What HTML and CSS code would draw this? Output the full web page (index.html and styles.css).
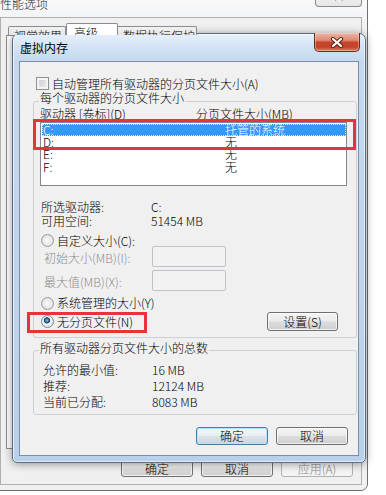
FILE: index.html
```html
<!DOCTYPE html>
<html lang="zh-CN">
<head>
<meta charset="utf-8">
<title>虚拟内存</title>
<link rel="stylesheet" href="styles.css">
</head>
<body>
<div class="desk">
  <div class="outer">
    <div class="outer-title">
      <span class="outer-caption">性能选项</span>
      <span class="outer-close">
        <svg width="12" height="10" viewBox="0 0 12 10"><path d="M2 1 L10 9 M10 1 L2 9" stroke="#555" stroke-width="2" fill="none"/></svg>
      </span>
    </div>
    <div class="outer-client">
      <div class="tabs">
        <span class="tab tab-first">视觉效果</span>
        <span class="tab tab-active">高级</span>
        <span class="tab tab-dep">数据执行保护</span>
      </div>
      <div class="tab-page"></div>
      <div class="outer-buttons">
        <span class="btn obtn">确定</span>
        <span class="btn obtn">取消</span>
        <span class="btn obtn btn-disabled">应用(A)</span>
      </div>
    </div>
  </div>

  <div class="dialog">
    <div class="dlg-title">
      <span class="dlg-caption">虚拟内存</span>
      <span class="dlg-close">
        <svg width="14" height="11" viewBox="0 0 14 11">
          <path d="M3 2 L11 9 M11 2 L3 9" stroke="#5a2418" stroke-width="4.2" stroke-linecap="round" fill="none"/>
          <path d="M3 2 L11 9 M11 2 L3 9" stroke="#ffffff" stroke-width="2.2" stroke-linecap="round" fill="none"/>
        </svg>
      </span>
    </div>
    <div class="dlg-client">
      <div class="chk-row">
        <span class="checkbox"></span>
        <span>自动管理所有驱动器的分页文件大小(A)</span>
      </div>

      <div class="group group-drives">
        <span class="glabel">每个驱动器的分页文件大小</span>
        <div class="cols">
          <span class="col1">驱动器 [卷标](D)</span>
          <span>分页文件大小(MB)</span>
        </div>
        <div class="list">
          <div class="row sel"><span class="rc1">C:</span><span>托管的系统</span></div>
          <div class="row"><span class="rc1">D:</span><span>无</span></div>
          <div class="row"><span class="rc1">E:</span><span>无</span></div>
          <div class="row"><span class="rc1">F:</span><span>无</span></div>
        </div>
        <div class="info">
          <div class="info-row"><span class="info-l">所选驱动器:</span><span>C:</span></div>
          <div class="info-row"><span class="info-l">可用空间:</span><span>51454 MB</span></div>
        </div>
        <div class="radio-row r-custom">
          <span class="radio"></span>
          <span>自定义大小(C):</span>
        </div>
        <div class="field">
          <span class="field-l">初始大小(MB)(I):</span>
          <span class="input"></span>
        </div>
        <div class="field field2">
          <span class="field-l">最大值(MB)(X):</span>
          <span class="input"></span>
        </div>
        <div class="radio-row r-sys">
          <span class="radio"></span>
          <span>系统管理的大小(Y)</span>
        </div>
        <div class="radio-row r-none">
          <span class="radio on"></span>
          <span>无分页文件(N)</span>
          <span class="btn btn-set">设置(S)</span>
        </div>
      </div>

      <div class="group group-total">
        <span class="glabel">所有驱动器分页文件大小的总数</span>
        <div class="totals">
          <div class="t-row"><span class="t-l">允许的最小值:</span><span>16 MB</span></div>
          <div class="t-row"><span class="t-l">推荐:</span><span>12124 MB</span></div>
          <div class="t-row"><span class="t-l">当前已分配:</span><span>8083 MB</span></div>
        </div>
      </div>

      <div class="dlg-buttons">
        <span class="btn dbtn btn-default">确定</span>
        <span class="btn dbtn">取消</span>
      </div>
    </div>
  </div>

  <div class="mark mark-list"></div>
  <div class="mark mark-radio"></div>
</div>
</body>
</html>
```

FILE: styles.css
```css
* { box-sizing: border-box; margin: 0; padding: 0; }
html, body { width: 386px; height: 495px; overflow: hidden; background: #ffffff; }
body {
  font-family: "Noto Sans CJK SC", "Noto Sans", sans-serif;
  font-size: 12px;
  font-weight: 300;
  line-height: 12px;
  color: #000;
}
.desk { position: relative; width: 386px; height: 495px; overflow: hidden; }

/* ---------- outer window (性能选项) ---------- */
.outer {
  position: absolute;
  left: -8px; top: -13px;
  width: 376px; height: 504px;
  border: 1px solid #707070;
  border-radius: 7px;
  background: linear-gradient(#fbfbfb 0, #f3f4f6 30px, #eef0f2 100%);
  padding: 0 5px 5px 7px;
  display: flex;
  flex-direction: column;
}
.outer-title { height: 29px; display: flex; align-items: flex-start; flex: none; }
.outer-caption { margin-top: 9px; line-height: 14px; color: #1e1e1e; }
.outer-close {
  margin-left: auto;
  width: 47px; height: 19px;
  border: 1px solid #8c8c8c;
  border-top: none;
  border-radius: 0 0 4px 4px;
  background: linear-gradient(#fafafa, #e6e6e6);
  display: flex; align-items: flex-start; justify-content: center;
  padding-top: 3px;
}
.outer-client {
  flex: 1;
  background: #f0f0f0;
  border: 1px solid #b0b0b0;
  padding-top: 6px;
  display: flex;
  flex-direction: column;
}
.tabs { height: 11px; display: flex; align-items: flex-end; padding-left: 7px; position: relative; z-index: 1; flex: none; }
.tab {
  height: 9px;
  border: 1px solid #898c95;
  border-bottom: none;
  border-radius: 2px 2px 0 0;
  background: linear-gradient(#f2f2f2, #e4e4e4);
  padding: 3px 0 0 5px;
  overflow: hidden;
  white-space: nowrap;
}
.tab-first { width: 58px; }
.tab-active { width: 52px; height: 12px; background: #fff; padding: 3px 0 0 7px; margin-right: -1px; }
.tab-dep { width: 80px; }
.tab-page {
  margin-left: 5px;
  width: 350px; height: 414px;
  background: #fff;
  border: 1px solid #898c95;
  flex: none;
}
.outer-buttons { margin-top: 11px; display: flex; justify-content: flex-end; gap: 8px; padding-right: 8px; }

/* ---------- buttons ---------- */
.btn {
  display: flex; align-items: center; justify-content: center;
  border: 1px solid #707070;
  border-radius: 3px;
  background: linear-gradient(#f3f3f3 0%, #ebebeb 48%, #dddddd 52%, #cfcfcf 100%);
  box-shadow: inset 0 0 0 1px rgba(255,255,255,.7);
  white-space: nowrap;
  flex: none;
}
.obtn { width: 72px; height: 17px; }
.btn-disabled { border-color: #adb2b5; background: #f4f4f4; color: #8b8b8b; box-shadow: none; }

/* ---------- dialog (虚拟内存) ---------- */
.dialog {
  position: absolute;
  left: 12px; top: 33px;
  width: 354px; height: 430px;
  border: 1px solid #5a6a80;
  border-radius: 7px 7px 5px 5px;
  background: linear-gradient(180deg, #e6f0fb 0, #d4e4f5 12px, #c4d9ef 27px, #b9d0ea 100%);
  box-shadow: 0 1px 9px rgba(0,0,0,.4), inset 0 0 0 1px rgba(255,255,255,.6);
  padding: 0 6px 6px 6px;
  display: flex;
  flex-direction: column;
}
.dlg-title { height: 27px; display: flex; align-items: flex-start; flex: none; }
.dlg-caption { margin: 7px 0 0 1px; line-height: 14px; color: #000; font-weight: 400; }
.dlg-close {
  margin: -1px -1px 0 auto;
  width: 46px; height: 19px;
  border: 1px solid #6a2a1e;
  border-top: none;
  border-radius: 0 0 5px 5px;
  background: linear-gradient(#ecb6a8 0%, #df8a72 40%, #c9432b 52%, #c4432b 78%, #dc8064 100%);
  box-shadow: inset 0 0 0 1px rgba(255,220,210,.45);
  display: flex; align-items: center; justify-content: center;
}
.dlg-client {
  flex: 1;
  background: #f0f0f0;
  border: 1px solid #7b8ea6;
  display: flex;
  flex-direction: column;
}

.chk-row { margin-top: 15px; padding-left: 16px; height: 13px; display: flex; align-items: center; gap: 3px; }
.checkbox {
  width: 13px; height: 13px; flex: none;
  border: 1px solid #8e8f8f;
  background: linear-gradient(135deg, #c9ccd0 0%, #eeeeee 100%);
  box-shadow: inset 0 0 0 2px #f4f4f4;
}

.group {
  margin-left: 13px;
  width: 324px;
  border: 1px solid #cbd1d6;
  border-radius: 3px;
  display: flex;
  flex-direction: column;
}
.group-drives { margin-top: 11px; padding-bottom: 6px; }
.group-total { margin-top: 12px; padding-bottom: 4px; }
.glabel {
  align-self: flex-start;
  margin: -10px 0 0 5px;
  padding: 0 1px;
  background: #f0f0f0;
  line-height: 12px;
}
.group-total .glabel { margin-top: -9px; }

.cols { margin-top: 4px; padding-left: 6px; display: flex; }
.col1 { width: 156px; }

.list {
  margin: 2px 0 0 6px;
  width: 307px; height: 64px;
  border: 1px solid #828790;
  background: #fff;
  padding-top: 1px;
}
.row { height: 12.3px; line-height: 12px; margin-left: 1px; padding-left: 1px; display: flex; }
.rc1 { width: 182px; }
.row.sel { height: 12px; background: #3399ff; color: #fff; outline: 1px dotted #cfe6ff; outline-offset: -1px; }

.info { margin-top: 14px; padding-left: 7px; }
.info-row { display: flex; line-height: 14px; height: 14px; }
.info-l { width: 110px; }

.radio-row { display: flex; align-items: center; gap: 3px; padding-left: 7px; }
.radio {
  width: 13px; height: 13px; flex: none;
  border-radius: 50%;
  border: 1px solid #9a9b9c;
  background: radial-gradient(circle at 50% 50%, #fbfbfb 0, #ececec 45%, #d2d2d2 100%);
}
.radio.on {
  border-color: #7c8794;
  background: radial-gradient(circle at 45% 40%, #9fd6f7 0, #2a78ad 1.6px, #173f62 2.8px, #e9e9e9 3.4px, #f3f3f3 4px, #d4d4d4 100%);
}
.r-custom { margin-top: 7px; height: 11px; }
.r-sys { margin-top: 6px; height: 12px; }
.r-none { margin-top: 3px; height: 19px; padding-right: 18px; }
.r-none .btn-set { margin-left: auto; width: 71px; height: 19px; }

.field { display: flex; align-items: center; height: 21px; padding-left: 10px; padding-top: 2px; }
.field2 { margin-top: 3px; }
.field-l { width: 108px; color: #8d8d8d; }
.input {
  width: 74px; height: 21px;
  margin-top: -2px;
  border: 1px solid #bfc3c7;
  border-radius: 2px;
  background: #f2f2f2;
}

.totals { margin-top: 8px; padding-left: 9px; }
.t-row { display: flex; height: 16px; line-height: 16px; }
.t-l { width: 109px; }

.dlg-buttons { margin-top: 12px; display: flex; justify-content: flex-end; gap: 8px; padding-right: 10px; }
.dbtn { width: 72px; height: 18px; }
.btn-default {
  border-color: #3c7fb1;
  box-shadow: inset 0 0 0 1px #b9e1f7;
  background: linear-gradient(#f2f6f9 0%, #e9eef2 48%, #dbe2e7 52%, #cdd6dc 100%);
}

/* ---------- red annotation frames ---------- */
.mark { position: absolute; border: 3px solid #e3353a; }
.mark-list { left: 33px; top: 119px; width: 323px; height: 31px; }
.mark-radio { left: 27px; top: 312px; width: 120px; height: 21px; }
```
